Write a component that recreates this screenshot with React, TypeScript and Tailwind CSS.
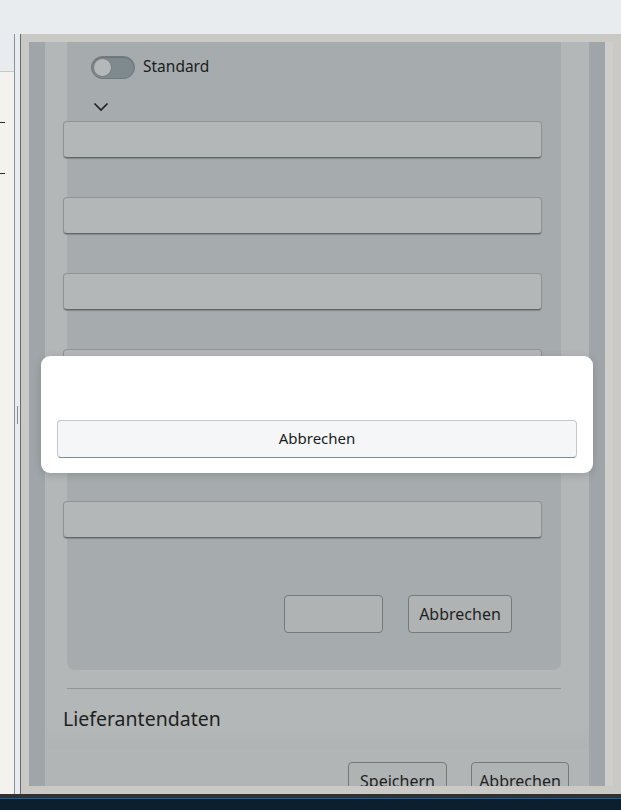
import React from "react";

const fieldRows = [0, 1, 2, 3, 4, 5];

function Toggle({ label }: { label: string }) {
  return (
    <div className="flex h-6 items-center gap-2">
      <div className="flex h-[23px] w-[44px] items-center rounded-full border border-[#6f797d] bg-[#7f8a8e] shadow-[inset_0_1px_1px_rgba(0,0,0,0.15)]">
        <div className="ml-[1px] h-[19px] w-[19px] rounded-full border border-[#76807f] bg-[#b4b8b9]" />
      </div>
      <span className="text-[15.5px] text-[#1c1d1e]">{label}</span>
    </div>
  );
}

function Field() {
  return (
    <div className="h-[37px] rounded-[4px] border border-[#8f9597] border-b-[#5f676a] bg-[#b3b7b8] shadow-[0_1px_1px_rgba(0,0,0,0.2)]" />
  );
}

function GhostButton({ children, className = "" }: { children?: React.ReactNode; className?: string }) {
  return (
    <button
      className={`flex h-[38px] items-center justify-center rounded-[4px] border border-[#737a7d] bg-[#afb3b4] text-[16px] text-[#1e1f20] ${className}`}
    >
      {children}
    </button>
  );
}

export default function App() {
  return (
    <div className="flex h-[810px] w-[621px] flex-col overflow-hidden bg-[#e8ecef] font-['Noto_Sans',sans-serif]">
      {/* Title strip */}
      <div className="h-[34px] shrink-0 bg-[#e8ecef]" />

      <div className="flex min-h-0 flex-1">
        {/* Side pane */}
        <div className="flex w-[14px] flex-col">
          <div className="h-[38px] border-b border-[#c9c9c9] bg-[#e8ecef]" />
          <div className="flex flex-1 flex-col bg-[#f3f2ef] pt-[50px]">
            <div className="h-px w-[5px] bg-[#2a2a2a]" />
            <div className="mt-[50px] h-px w-[5px] bg-[#2a2a2a]" />
          </div>
        </div>

        {/* Splitter */}
        <div className="w-px bg-[#8a9199]" />
        <div className="flex w-[5px] flex-col bg-[#e8ecef] pt-[372px]">
          <div className="ml-[2px] h-[18px] w-px bg-[#8a8d90]" />
        </div>
        <div className="w-px bg-[#66696c]" />

        {/* Window frame */}
        <div className="flex min-w-0 flex-1 bg-[#cbc9c6] py-2 pl-2">
          <div className="relative flex min-w-0 flex-1 overflow-hidden bg-[#9fa5a8] px-4">
            <div className="flex flex-1 flex-col bg-[#b3b7b8]">
              {/* Form panel */}
              <div className="ml-[22px] mr-[28px] flex h-[628px] shrink-0 flex-col rounded-b-lg bg-[#a6abad] pt-[13px]">
                <div className="pl-6">
                  <Toggle label="Standard" />
                </div>
                <div className="mt-[23px] pl-[26px]">
                  <svg width="16" height="10" viewBox="0 0 16 10" fill="none">
                    <polyline points="1.5,1.5 8,8 14.5,1.5" stroke="#1f2021" strokeWidth="1.6" />
                  </svg>
                </div>
                <div className="-ml-1 mr-[19px] mt-[9px] flex flex-col gap-[39px]">
                  {fieldRows.map((i) => (
                    <Field key={i} />
                  ))}
                </div>
                <div className="mt-[57px] flex justify-end gap-[25px] pr-[49px]">
                  <GhostButton className="w-[99px]" />
                  <GhostButton className="w-[104px]">Abbrechen</GhostButton>
                </div>
              </div>

              <div className="ml-[22px] mr-[28px] mt-[18px] h-px shrink-0 bg-[#8f9496]" />

              <div className="h-[60px] shrink-0 bg-gradient-to-b from-[#b3b7b8] from-60% to-[#afb3b4] pl-[18px] pt-[15px] text-[19.5px] text-[#1e1f20]">
                Lieferantendaten
              </div>

              {/* Footer actions */}
              <div className="flex shrink-0 justify-end gap-6 bg-[#b1b5b6] pr-5 pt-[13px]">
                <GhostButton className="w-[99px]">Speichern</GhostButton>
                <GhostButton className="w-[98px]">Abbrechen</GhostButton>
              </div>
            </div>

            {/* Confirm dialog */}
            <div className="absolute inset-0 flex items-center px-3">
              <div className="flex h-[117px] flex-1 flex-col justify-end rounded-[9px] bg-white px-4 pb-[15px] shadow-[0_2px_8px_rgba(0,0,0,0.15)]">
                <button className="flex h-[38px] items-center justify-center rounded-[4px] border border-[#c3c8cb] border-b-[#7f8d93] bg-[#f5f6f7] text-[15px] text-[#1b1c1d]">
                  Abbrechen
                </button>
              </div>
            </div>
          </div>

          {/* Scroll track */}
          <div className="flex w-4">
            <div className="w-2 bg-[#d0cecb]" />
          </div>
        </div>
      </div>

      {/* Taskbar */}
      <div className="flex h-4 shrink-0 flex-col">
        <div className="h-[4px] bg-[#2f3234]" />
        <div className="h-px bg-[#1c5d94]" />
        <div className="flex-1 bg-[#0b1f2e]" />
      </div>
    </div>
  );
}
